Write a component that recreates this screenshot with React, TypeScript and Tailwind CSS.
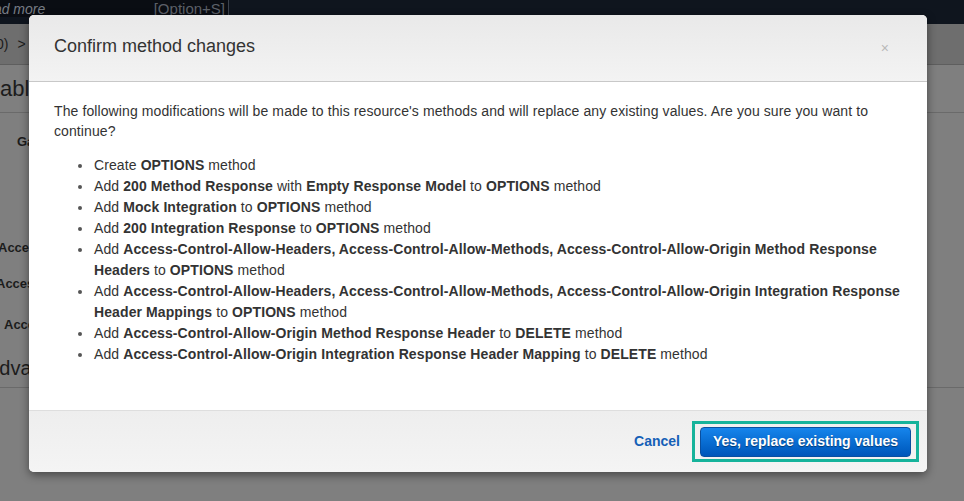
import React from 'react';

const font = { fontFamily: '"Liberation Sans", Helvetica, Arial, sans-serif' };

type Part = { t: string; b?: boolean };

const items: Part[][] = [
  [{ t: 'Create ' }, { t: 'OPTIONS', b: true }, { t: ' method' }],
  [
    { t: 'Add ' },
    { t: '200 Method Response', b: true },
    { t: ' with ' },
    { t: 'Empty Response Model', b: true },
    { t: ' to ' },
    { t: 'OPTIONS', b: true },
    { t: ' method' },
  ],
  [{ t: 'Add ' }, { t: 'Mock Integration', b: true }, { t: ' to ' }, { t: 'OPTIONS', b: true }, { t: ' method' }],
  [{ t: 'Add ' }, { t: '200 Integration Response', b: true }, { t: ' to ' }, { t: 'OPTIONS', b: true }, { t: ' method' }],
  [
    { t: 'Add ' },
    { t: 'Access-Control-Allow-Headers, Access-Control-Allow-Methods, Access-Control-Allow-Origin Method Response Headers', b: true },
    { t: ' to ' },
    { t: 'OPTIONS', b: true },
    { t: ' method' },
  ],
  [
    { t: 'Add ' },
    { t: 'Access-Control-Allow-Headers, Access-Control-Allow-Methods, Access-Control-Allow-Origin Integration Response Header Mappings', b: true },
    { t: ' to ' },
    { t: 'OPTIONS', b: true },
    { t: ' method' },
  ],
  [
    { t: 'Add ' },
    { t: 'Access-Control-Allow-Origin Method Response Header', b: true },
    { t: ' to ' },
    { t: 'DELETE', b: true },
    { t: ' method' },
  ],
  [
    { t: 'Add ' },
    { t: 'Access-Control-Allow-Origin Integration Response Header Mapping', b: true },
    { t: ' to ' },
    { t: 'DELETE', b: true },
    { t: ' method' },
  ],
];

function Background() {
  return (
    <div className="flex flex-col h-full text-[#1c1c1c]">
      {/* top nav */}
      <div className="h-[24px] bg-[#0f151e] flex items-start shrink-0">
        <div className="w-[229px] h-[17px] bg-[#0a0d13] border-r border-[#3b414b] flex items-center justify-between pr-[3px] overflow-hidden">
          <span className="italic text-[14px] text-[#777c84] -ml-[24px] leading-none">Read more</span>
          <span className="text-[15px] text-[#5c6068] leading-none">[Option+S]</span>
        </div>
      </div>
      {/* breadcrumb */}
      <div className="h-[41px] bg-[#6e6e6e] border-b border-[#5e5e5e] flex items-center shrink-0 overflow-hidden">
        <span className="text-[14px] -ml-[4px]">0)</span>
        <span className="text-[14px] ml-[9px]">&gt;</span>
      </div>
      {/* title */}
      <div className="h-[48px] border-b border-[#6a6a6a] flex items-center overflow-hidden shrink-0">
        <span className="text-[22px] -ml-[27px] whitespace-nowrap">Enable CORS</span>
      </div>
      {/* form */}
      <div className="h-[275px] border-b border-[#6a6a6a] overflow-hidden text-[13px] font-bold whitespace-nowrap shrink-0">
        <div className="mt-[19px] ml-[17px]">Gateway Responses</div>
        <div className="mt-[86px] -ml-[2px]">Access-Control-Allow-Methods</div>
        <div className="mt-[17px] -ml-[4px]">Access-Control-Allow-Headers</div>
        <div className="mt-[21px] ml-[4px]">Access-Control-Allow-Origin</div>
        <div className="mt-[19px] -ml-[14px] text-[20px] font-normal">Advanced</div>
      </div>
      <div className="flex-1" />
    </div>
  );
}

export default function App() {
  return (
    <div className="relative w-[964px] h-[501px] overflow-hidden bg-[#7f7f7f]" style={font}>
      <Background />

      {/* Modal */}
      <div className="absolute left-[29px] top-[15px] w-[898px] h-[457px] flex flex-col bg-white rounded-[5px] overflow-hidden shadow-[0_3px_10px_rgba(0,0,0,0.45)]">
        <div className="h-[67px] shrink-0 flex items-start justify-between pl-[25px] pr-[38px] pt-[20px] bg-gradient-to-b from-[#e9e9e9] to-[#f3f3f3] border-b border-[#c8c8c8]">
          <h2 className="text-[18px] leading-[22px] text-[#333]">Confirm method changes</h2>
          <span className="text-[14px] leading-[22px] text-[#b9b9b9] mt-[2px]">×</span>
        </div>

        <div className="flex-1 px-[25px] pt-[19px] text-[14px] text-[#333] tracking-[0.1px]">
          <p className="leading-[20px]">
            The following modifications will be made to this resource's methods and will replace any existing values. Are you sure you want to continue?
          </p>
          <ul className="mt-[14px] pl-[24px]">
            {items.map((parts, i) => (
              <li key={i} className="flex leading-[21px]">
                <span className="w-[16px] h-[21px] shrink-0 flex items-center">
                  <span className="w-[4px] h-[4px] rounded-full bg-[#555]" />
                </span>
                <span>
                  {parts.map((p, j) =>
                    p.b ? (
                      <b key={j} className="font-bold">
                        {p.t}
                      </b>
                    ) : (
                      <React.Fragment key={j}>{p.t}</React.Fragment>
                    )
                  )}
                </span>
              </li>
            ))}
          </ul>
        </div>

        <div className="h-[62px] shrink-0 flex items-center justify-end pr-[8px] bg-gradient-to-b from-[#eeeeee] to-[#f4f4f4] border-t border-[#dedede]">
          <button className="text-[14px] font-bold text-[#1560b7] mr-[12px]">Cancel</button>
          <div className="w-[227px] h-[41px] border-[3px] border-[#16b39b] flex items-center justify-center">
            <button className="w-[211px] h-[30px] rounded-[4px] border border-[#0a4f9f] bg-gradient-to-b from-[#1685ec] to-[#0056ba] text-white text-[14px] font-bold [text-shadow:0_1px_1px_rgba(0,0,0,0.45)]">
              Yes, replace existing values
            </button>
          </div>
        </div>
      </div>
    </div>
  );
}
